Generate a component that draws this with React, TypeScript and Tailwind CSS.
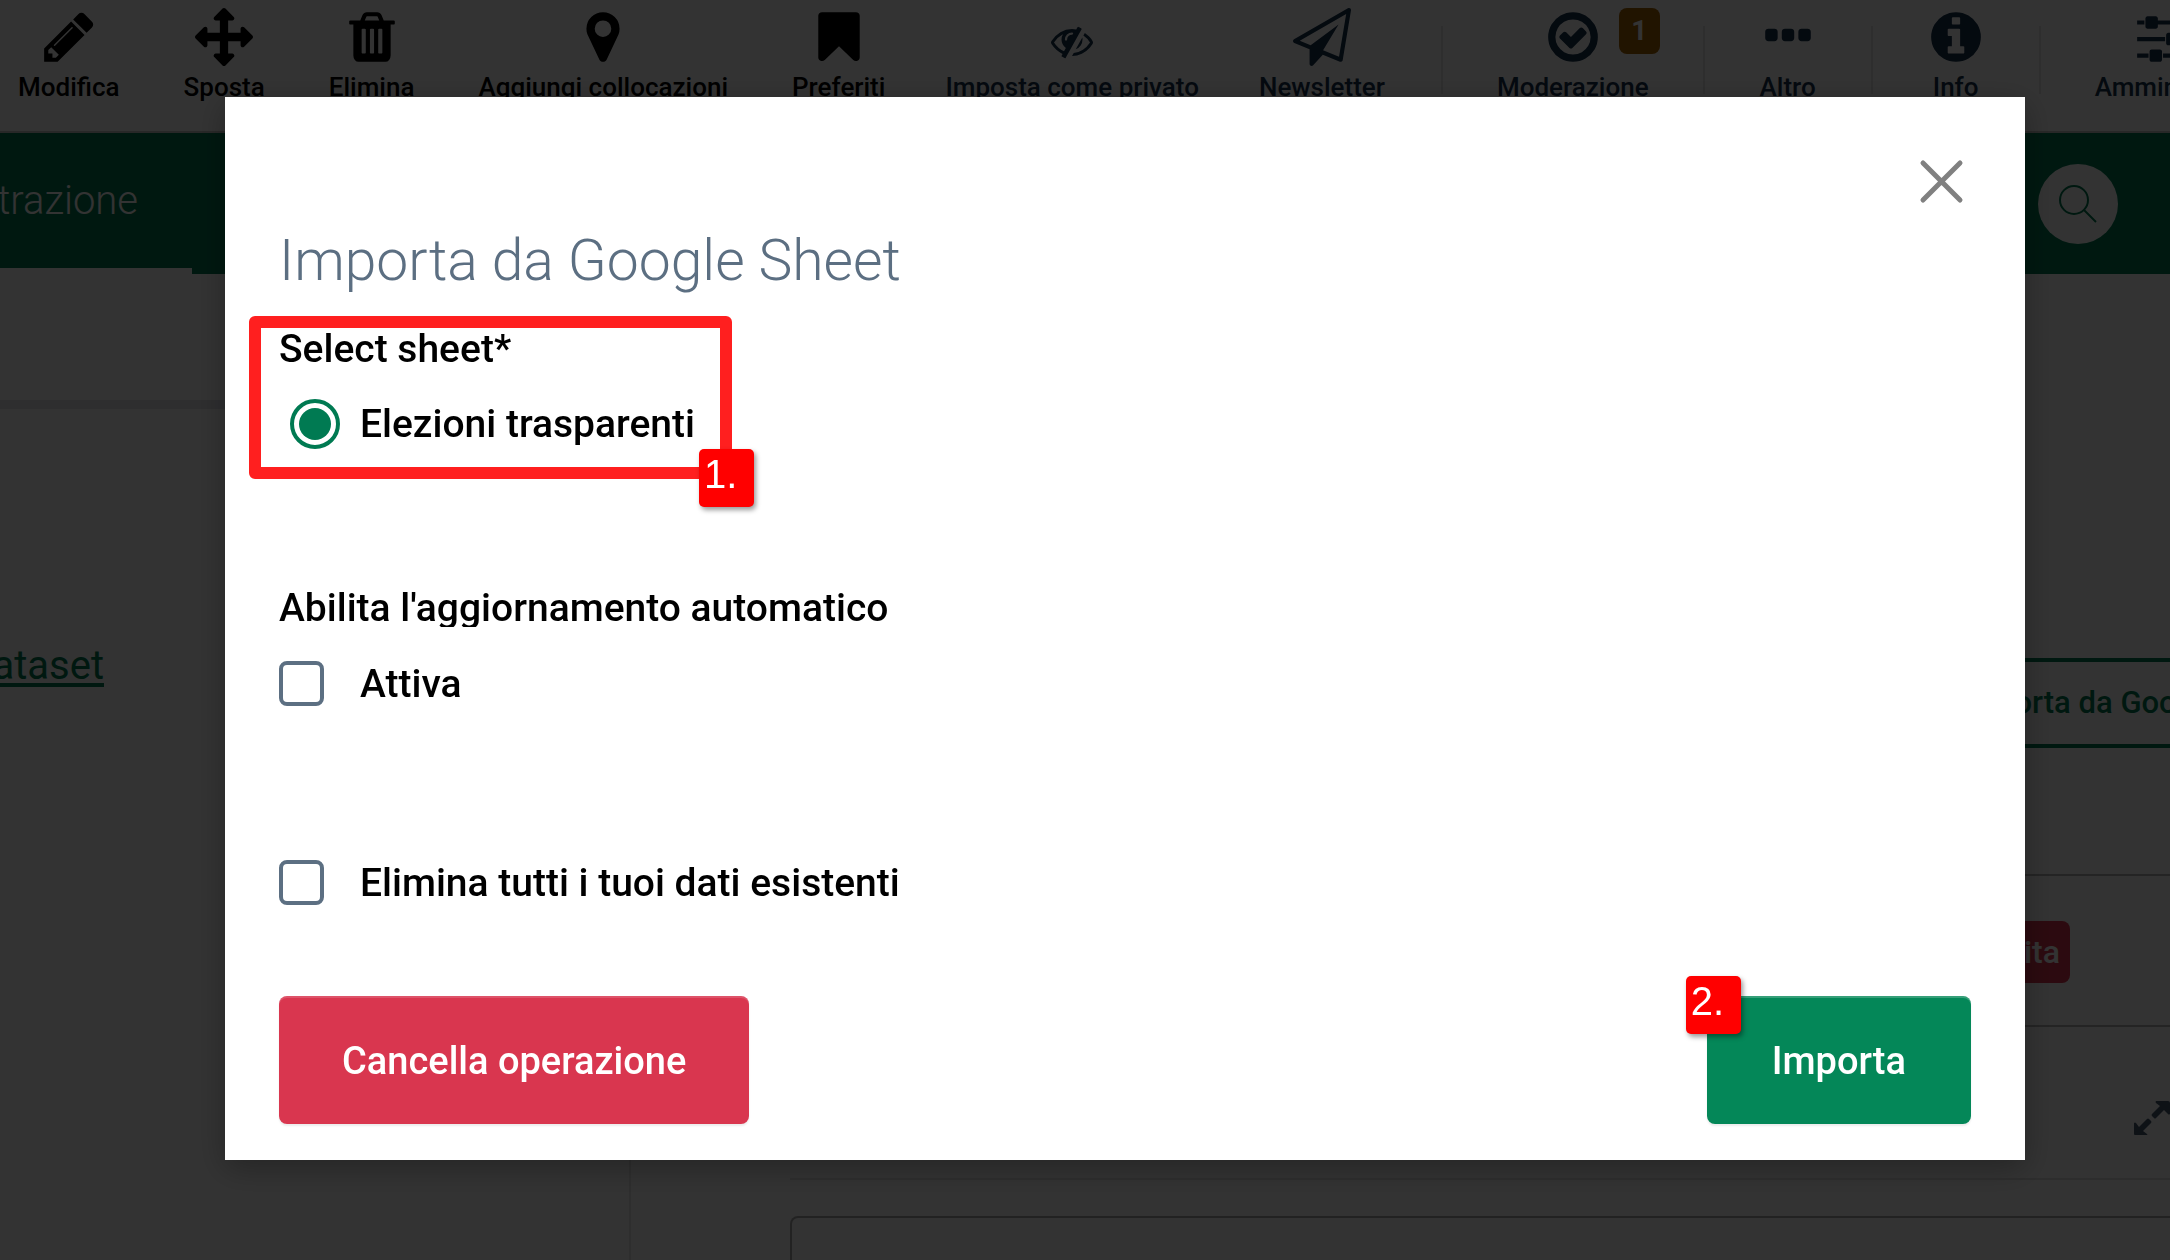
import { useState } from "react";
import type { ReactNode } from "react";

const icons = {
  pencil:
    "M491 1536l91-91-235-235-91 91v107h128v128h107zm523-928q0-22-22-22-10 0-17 7l-542 542q-7 7-7 17 0 22 22 22 10 0 17-7l542-542q7-7 7-17zm-54-192l416 416-832 832h-416v-416zm683 96q0 53-37 90l-166 166-416-416 166-165q36-38 90-38 53 0 91 38l235 234q37 39 37 91z",
  move:
    "M1792 896q0 26-19 45l-256 256q-19 19-45 19t-45-19-19-45v-128h-384v384h128q26 0 45 19t19 45-19 45l-256 256q-19 19-45 19t-45-19l-256-256q-19-19-19-45t19-45 45-19h128v-384h-384v128q0 26-19 45t-45 19-45-19l-256-256q-19-19-19-45t19-45l256-256q19-19 45-19t45 19 19 45v128h384v-384h-128q-26 0-45-19t-19-45 19-45l256-256q19-19 45-19t45 19l256 256q19 19 19 45t-19 45-45 19h-128v384h384v-128q0-26 19-45t45-19 45 19l256 256q19 19 19 45z",
  trash:
    "M704 1376v-704q0-14-9-23t-23-9h-64q-14 0-23 9t-9 23v704q0 14 9 23t23 9h64q14 0 23-9t9-23zm256 0v-704q0-14-9-23t-23-9h-64q-14 0-23 9t-9 23v704q0 14 9 23t23 9h64q14 0 23-9t9-23zm256 0v-704q0-14-9-23t-23-9h-64q-14 0-23 9t-9 23v704q0 14 9 23t23 9h64q14 0 23-9t9-23zm-544-992h448l-48-117q-7-9-17-11h-317q-10 2-17 11zm928 32v64q0 14-9 23t-23 9h-96v948q0 83-47 143.5t-113 60.5h-832q-66 0-113-58.5t-47-141.5v-952h-96q-14 0-23-9t-9-23v-64q0-14 9-23t23-9h309l70-167q15-37 54-63t79-26h320q40 0 79 26t54 63l70 167h309q14 0 23 9t9 23z",
  marker:
    "M1152 640q0-106-75-181t-181-75-181 75-75 181 75 181 181 75 181-75 75-181zm256 0q0 109-33 179l-364 774q-16 33-47.5 52t-67.5 19-67.5-19-46.5-52l-365-774q-33-70-33-179 0-212 150-362t362-150 362 150 150 362z",
  bookmark:
    "M1420 128q23 0 44 9 33 13 52.5 41t19.5 62v1289q0 34-19.5 62t-52.5 41q-19 8-44 8-48 0-83-32l-441-424-441 424q-36 33-83 33-23 0-44-9-33-13-52.5-41t-19.5-62v-1289q0-34 19.5-62t52.5-41q21-9 44-9h1048z",
  eyeSlash:
    "M555 1335l78-141q-87-63-136-159t-49-203q0-121 61-225-229 117-381 353 167 258 427 375zm389-759q0-20-14-34t-34-14q-125 0-214.5 89.5t-89.5 214.5q0 20 14 34t34 14 34-14 14-34q0-86 61-147t147-61q20 0 34-14t14-34zm363-191q0 7-1 9-106 189-316 567t-315 566l-49 89q-10 16-28 16-12 0-134-70-16-10-16-28 0-12 44-87-143-65-263.5-173t-208.5-245q-20-31-20-69t20-69q153-235 380-371t496-136q89 0 180 17l54-97q10-16 28-16 5 0 18 6t31 15.5 33 18.5 31.5 18.5 19.5 11.5q16 10 16 27zm37 447q0 139-79 253.5t-209 164.5l280-502q8 45 8 84zm448 128q0 35-20 69-39 64-109 145-150 172-347.5 267t-419.5 95l74-132q212-18 392.5-137t301.5-307q-115-179-282-294l63-112q95 64 182.5 153t144.5 184q20 34 20 69z",
  plane:
    "M1764 11q33 24 27 64l-256 1536q-5 29-32 45-14 8-31 8-11 0-24-5l-527-215-298 327q-18 21-47 21-14 0-23-4-19-7-30-23.5t-11-36.5v-452l-472-193q-37-14-40-55-3-39 32-59l1664-960q35-21 68 2zm-342 1499l221-1323-1434 827 336 137 863-639-478 797z",
  check:
    "M1299 813l-422 422q-19 19-45 19t-45-19l-294-294q-19-19-19-45t19-45l102-102q19-19 45-19t45 19l147 147 275-275q19-19 45-19t45 19l102 102q19 19 19 45t-19 45zm141 83q0-148-73-273t-198-198-273-73-273 73-198 198-73 273 73 273 198 198 273 73 273-73 198-198 73-273zm224 0q0 209-103 385.5t-279.5 279.5-385.5 103-385.5-103-279.5-279.5-103-385.5 103-385.5 279.5-279.5 385.5-103 385.5 103 279.5 279.5 103 385.5z",
  dots:
    "M576 736v192q0 40-28 68t-68 28h-192q-40 0-68-28t-28-68v-192q0-40 28-68t68-28h192q40 0 68 28t28 68zm512 0v192q0 40-28 68t-68 28h-192q-40 0-68-28t-28-68v-192q0-40 28-68t68-28h192q40 0 68 28t28 68zm512 0v192q0 40-28 68t-68 28h-192q-40 0-68-28t-28-68v-192q0-40 28-68t68-28h192q40 0 68 28t28 68z",
  info:
    "M1152 1376v-160q0-14-9-23t-23-9h-96v-512q0-14-9-23t-23-9h-320q-14 0-23 9t-9 23v160q0 14 9 23t23 9h96v320h-96q-14 0-23 9t-9 23v160q0 14 9 23t23 9h448q14 0 23-9t9-23zm-128-896v-160q0-14-9-23t-23-9h-192q-14 0-23 9t-9 23v160q0 14 9 23t23 9h192q14 0 23-9t9-23zm640 416q0 209-103 385.5t-279.5 279.5-385.5 103-385.5-103-279.5-279.5-103-385.5 103-385.5 279.5-279.5 385.5-103 385.5 103 279.5 279.5 103 385.5z",
  sliders:
    "M480 1408v128h-352v-128h352zm352-128q26 0 45 19t19 45v256q0 26-19 45t-45 19h-256q-26 0-45-19t-19-45v-256q0-26 19-45t45-19h256zm160-384v128h-864v-128h864zm-640-512v128h-224v-128h224zm1312 1024v128h-736v-128h736zm-960-1152q26 0 45 19t19 45v256q0 26-19 45t-45 19h-256q-26 0-45-19t-19-45v-256q0-26 19-45t45-19h256zm640 512q26 0 45 19t19 45v256q0 26-19 45t-45 19h-256q-26 0-45-19t-19-45v-256q0-26 19-45t45-19h256zm192 128v128h-224v-128h224zm0-512v128h-864v-128h864z",
};

const mainTools: { label: string; icon: keyof typeof icons }[] = [
  { label: "Modifica", icon: "pencil" },
  { label: "Sposta", icon: "move" },
  { label: "Elimina", icon: "trash" },
  { label: "Aggiungi collocazioni", icon: "marker" },
  { label: "Preferiti", icon: "bookmark" },
];

const sideTools: { label: string; icon: keyof typeof icons; count?: number }[] = [
  { label: "Moderazione", icon: "check", count: 1 },
  { label: "Altro", icon: "dots" },
  { label: "Info", icon: "info" },
  { label: "Amministra", icon: "sliders" },
];

function ToolIcon({ name, className }: { name: keyof typeof icons; className: string }) {
  return (
    <svg viewBox="0 0 1792 1792" fill="currentColor" className={className} aria-hidden="true">
      <path d={icons[name]} />
    </svg>
  );
}

function Tool({
  label,
  icon,
  className,
  iconClassName = "size-[58px]",
  children,
}: {
  label: string;
  icon: keyof typeof icons;
  className: string;
  iconClassName?: string;
  children?: ReactNode;
}) {
  return (
    <a
      href="#"
      className={`relative flex shrink-0 flex-col items-center whitespace-nowrap pt-2 ${className}`}
    >
      <ToolIcon name={icon} className={iconClassName} />
      <span className="mt-[5px] text-[26px] leading-8 font-medium">{label}</span>
      {children}
    </a>
  );
}

function Toolbar() {
  return (
    <div className="flex h-[133px] items-start overflow-hidden border-b-2 border-[#c8c8c8] pl-[18px] text-black">
      {mainTools.map((t) => (
        <Tool key={t.label} label={t.label} icon={t.icon} className="pr-16" />
      ))}
      <div className="-ml-1 flex text-[#17324d]">
        <Tool
          label="Imposta come privato"
          icon="eyeSlash"
          className="pr-15"
          iconClassName="mt-3 mb-1 size-[42px]"
        />
        <Tool label="Newsletter" icon="plane" className="pr-14" />
        {sideTools.map((t) => (
          <div key={t.label} className="flex">
            <div className="mt-[26px] h-[68px] w-[2px] bg-[#e6e6e6]" />
            <Tool label={t.label} icon={t.icon} className="px-[54px]">
              {t.count && (
                <span className="absolute top-2 left-1/2 ml-[46px] flex h-[46px] w-[41px] items-center justify-center rounded-lg bg-[#a66300] text-[28px] font-bold text-white">
                  {t.count}
                </span>
              )}
            </Tool>
          </div>
        ))}
      </div>
    </div>
  );
}

function NavBar() {
  return (
    <nav className="flex h-[141px] items-stretch justify-between bg-[#007a52]">
      <a
        href="#"
        className="flex w-[192px] items-center justify-end overflow-hidden border-b-[6px] border-white pr-[54px] text-[40px] font-light whitespace-nowrap text-white"
      >
        Amministrazione
      </a>
      <button
        type="button"
        aria-label="Cerca"
        className="mr-[52px] size-20 self-center rounded-full bg-white text-[#007a52]"
      >
        <svg viewBox="0 0 80 80" fill="none" stroke="currentColor" strokeWidth="2" className="size-20">
          <circle cx="36" cy="36" r="14" />
          <path d="M46 46l12 12" />
        </svg>
      </button>
    </nav>
  );
}

function PageBody() {
  return (
    <div className="flex grow">
      <aside className="w-[631px] shrink-0 border-r-2 border-[#e6e6e6]">
        <div className="h-[135px] border-b-[9px] border-[#e3e4eb]" />
        <div className="flex w-[104px] justify-end overflow-hidden pt-[231px]">
          <a
            href="#"
            className="text-[40px] leading-[52px] text-[#007a52] underline decoration-4 underline-offset-4"
          >
            Dataset
          </a>
        </div>
      </aside>
      <section className="ml-[159px] flex min-w-0 grow flex-col pt-36">
        <div className="flex h-[458px] items-start justify-end border-b-2 border-[#b4b4b4] pt-60">
          <button
            type="button"
            className="-mr-[172px] h-[90px] shrink-0 rounded-lg border-4 border-[#007a52] px-8 text-[31px] font-medium whitespace-nowrap text-[#007a52]"
          >
            Importa da Google Sheet
          </button>
        </div>
        <div className="flex h-[151px] items-center justify-end border-b-2 border-[#b4b4b4] pr-[100px]">
          <span className="mt-[2px] rounded-lg bg-[#d9364f] px-[10px] text-[32px] leading-[62px] font-medium text-white">
            Fallita
          </span>
        </div>
        <div className="flex h-[153px] items-end justify-end border-b-2 border-[#e1e1e1] pb-[42px]">
          <button type="button" aria-label="Espandi" className="text-[#455b71]">
            <svg viewBox="0 0 37 36" fill="currentColor" className="h-9 w-[37px]">
              <path d="M23 1h12q2 0 2 2v11q-1 1-2 0l-4-4-8 8q-1 1-2 0l-2-2q-1-1 0-2l8-8-4-3q-1-1 0-2z" />
              <path d="M14 35H2q-1 0-1-1V23q1-1 2 0l3 4 8-8q1-1 2 0l2 2q1 1 0 2l-8 8 4 3q1 1 0 1z" />
            </svg>
          </button>
        </div>
        <div className="mt-9 -mr-4 grow rounded-tl-lg border-2 border-b-0 border-[#aaa]" />
      </section>
    </div>
  );
}

function Marker({ text, className }: { text: string; className: string }) {
  return (
    <span
      className={`absolute h-[58px] w-[55px] rounded-[5px] bg-[#f00] pl-[5px] font-['Liberation_Sans',sans-serif] text-[40px] leading-[50px] text-white shadow-[2px_3px_5px_rgba(0,0,0,0.4)] ${className}`}
    >
      {text}
    </span>
  );
}

function CheckField({
  label,
  checked,
  onChange,
}: {
  label: string;
  checked: boolean;
  onChange: (value: boolean) => void;
}) {
  return (
    <label className="flex w-fit items-center gap-9">
      <input
        type="checkbox"
        checked={checked}
        onChange={(e) => onChange(e.target.checked)}
        className="size-[45px] appearance-none rounded-lg border-4 border-[#5c6f82] checked:bg-[#007a52]"
      />
      <span className="leading-11">{label}</span>
    </label>
  );
}

function ImportDialog() {
  const [sheet, setSheet] = useState("Elezioni trasparenti");
  const [autoUpdate, setAutoUpdate] = useState(false);
  const [deleteData, setDeleteData] = useState(false);

  return (
    <div
      role="dialog"
      aria-modal="true"
      aria-labelledby="dialog-title"
      className="mt-[97px] mr-[145px] ml-[225px] flex grow flex-col bg-white px-[54px] pt-[54px] pb-9 text-[39px] font-medium text-black shadow-[0_8px_30px_rgba(0,0,0,0.3)]"
    >
      <button type="button" aria-label="Chiudi" className="size-15 self-end text-[#808080]">
        <svg viewBox="0 0 60 60" fill="none" stroke="currentColor" strokeWidth="5" strokeLinecap="round">
          <path d="M12 12l37 37M49 12L12 49" />
        </svg>
      </button>

      <h1 id="dialog-title" className="mt-[18px] text-[57px] leading-16 font-light text-[#5c6f82]">
        Importa da Google Sheet
      </h1>

      <div className="relative mt-[34px]">
        <fieldset>
          <legend className="leading-11">Select sheet*</legend>
          <label className="mt-7 ml-[11px] flex w-fit items-center gap-5">
            <input
              type="radio"
              name="sheet"
              value="Elezioni trasparenti"
              checked={sheet === "Elezioni trasparenti"}
              onChange={(e) => setSheet(e.target.value)}
              className="size-[50px] appearance-none rounded-full border-4 border-[#007a52] bg-clip-content p-[5px] checked:bg-[#007a52]"
            />
            <span className="leading-11">Elezioni trasparenti</span>
          </label>
        </fieldset>
        <div className="pointer-events-none absolute -top-[11px] -left-[30px] h-[163px] w-[483px] rounded-[6px] border-[12px] border-[#ff1f1f]" />
        <Marker text="1." className="top-[122px] left-[420px]" />
      </div>

      <h2 className="mt-[137px] h-[41px] overflow-hidden leading-11">
        Abilita l'aggiornamento automatico
      </h2>
      <div className="mt-[34px]">
        <CheckField label="Attiva" checked={autoUpdate} onChange={setAutoUpdate} />
      </div>
      <div className="mt-[154px]">
        <CheckField
          label="Elimina tutti i tuoi dati esistenti"
          checked={deleteData}
          onChange={setDeleteData}
        />
      </div>

      <div className="mt-[91px] flex justify-between text-[38px] text-white">
        <button
          type="button"
          className="h-32 rounded-lg bg-[#d9364f] px-[63px] pt-[2px] shadow-[inset_0_2px_0_rgba(255,255,255,0.15),0_2px_2px_rgba(0,0,0,0.08)]"
        >
          Cancella operazione
        </button>
        <div className="relative">
          <button
            type="button"
            className="h-32 rounded-lg bg-[#048758] px-[65px] pt-[2px] shadow-[inset_0_2px_0_rgba(255,255,255,0.2),0_2px_2px_rgba(0,0,0,0.08)]"
          >
            Importa
          </button>
          <Marker text="2." className="-top-5 -left-[21px]" />
        </div>
      </div>
    </div>
  );
}

export default function App() {
  return (
    <main className="font-['Roboto',sans-serif]">
      <div className="flex h-screen flex-col overflow-hidden bg-white">
        <Toolbar />
        <NavBar />
        <PageBody />
      </div>
      <div className="fixed inset-0 flex items-start overflow-hidden bg-black/80">
        <ImportDialog />
      </div>
    </main>
  );
}
